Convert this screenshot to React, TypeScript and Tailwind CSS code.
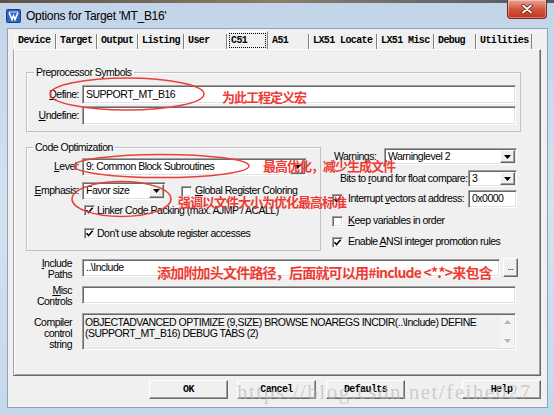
const sans = "font-['Liberation_Sans',Arial,sans-serif] text-[10.5px] tracking-[-0.5px]"
const mono = "font-['Liberation_Mono','Courier_New',monospace] font-bold text-[10px] tracking-[-0.6px]"
const cjk = "font-['Noto_Sans_CJK_SC',sans-serif] font-bold text-[#ee3b33]"
const sunken =
  'border border-t-[#a0a0a0] border-l-[#a0a0a0] border-r-white border-b-white shadow-[inset_1px_1px_0_#696969,inset_-1px_-1px_0_#e3e3e3]'
const raised =
  'border border-t-white border-l-white border-r-[#696969] border-b-[#696969] shadow-[inset_-1px_-1px_0_#a0a0a0]'

const tabs: [string, number][] = [
  ['Device', 42],
  ['Target', 41],
  ['Output', 41],
  ['Listing', 46],
  ['User', 43],
  ['C51', 41],
  ['A51', 41],
  ['LX51 Locate', 68],
  ['LX51 Misc', 57],
  ['Debug', 42],
  ['Utilities', 56],
]

export default function App() {
  return (
    <div
      className={`relative h-[415px] w-[554px] overflow-hidden bg-linear-to-b from-[#c2d4e9] via-[#d4e1ef] to-[#c6d8ec] text-black ${sans}`}
    >
      <div className="h-[3px] bg-linear-to-r from-[#5e5346] via-[#8c7c6a] to-[#4f5a66]" />

      {/* title bar */}
      <div className="flex h-[25px] items-center pl-[6px] pr-[7px]">
        <AppIcon />
        <span className="ml-[5px] text-[12px] tracking-[-0.3px]">Options for Target 'MT_B16'</span>
        <CloseButton />
      </div>

      {/* client area */}
      <div className="ml-[7px] h-[380px] w-[541px] border border-[#8da2bb] bg-[#f0f0f0]">
        <div className={`flex h-[20px] items-end pl-[6px] ${mono}`}>
          {tabs.map(([label, w]) =>
            label === 'C51' ? (
              <div key={label} className="flex h-[18px] border-r border-l border-t border-r-[#808080] border-l-white border-t-white bg-[#f0f0f0] p-[1px]" style={{ width: w }}>
                <span className="flex-1 border border-dotted border-black pl-[1px] leading-[13px]">{label}</span>
              </div>
            ) : (
              <div
                key={label}
                className="h-[15px] border-r border-l border-r-[#808080] border-l-white pl-[3px] leading-[14px]"
                style={{ width: w }}
              >
                {label}
              </div>
            ),
          )}
        </div>

        <div className="ml-[5px] h-[327px] w-[528px] border border-t-white border-l-[#a0a0a0] border-r-[#696969] border-b-[#696969] shadow-[inset_1px_0_0_white,inset_-1px_-1px_0_#a0a0a0]">
          <fieldset className="ml-[12px] mt-[16px] h-[66px] w-[495px] border border-[#c2c2c2] shadow-[inset_1px_1px_0_white]">
            <legend className="ml-[7px] px-[2px] leading-[12px]">Preprocessor Symbols</legend>
            <div className="mt-[7px] flex h-[19px] items-center">
              <span className="w-[52px] text-right">
                <u>D</u>efine:
              </span>
              <div className={`ml-[3px] flex h-[19px] w-[434px] items-center bg-white pl-[3px] ${sunken}`}>SUPPORT_MT_B16</div>
            </div>
            <div className="mt-[2px] flex h-[19px] items-center">
              <span className="w-[52px] text-right">
                <u>U</u>ndefine:
              </span>
              <div className={`ml-[3px] h-[19px] w-[434px] bg-white ${sunken}`} />
            </div>
          </fieldset>

          <div className="mt-[9px] flex items-start">
            <fieldset className="ml-[12px] h-[110px] w-[295px] border border-[#c2c2c2] shadow-[inset_1px_1px_0_white]">
              <legend className="ml-[6px] px-[2px] leading-[12px]">Code Optimization</legend>
              <div className="mt-[5px] flex h-[18px] items-center">
                <span className="w-[52px] text-right">
                  <u>L</u>evel:
                </span>
                <Combo className="ml-[3px] h-[18px] w-[225px]" value="9: Common Block Subroutines" />
              </div>
              <div className="mt-[6px] flex h-[18px] items-center">
                <span className="w-[52px] text-right">
                  <u>E</u>mphasis:
                </span>
                <Combo className="ml-[3px] h-[18px] w-[84px]" value="Favor size" />
                <Check className="ml-[15px]" />
                <span className="ml-[3px]">
                  <u>G</u>lobal Register Coloring
                </span>
              </div>
              <div className="mt-[4px] flex h-[13px] items-center pl-[57px]">
                <Check checked />
                <span className="ml-[2px]">Linker Code Packing (max. AJMP / ACALL)</span>
              </div>
              <div className="mt-[10px] flex h-[13px] items-center pl-[57px]">
                <Check checked />
                <span className="ml-[2px]">Don't use absolute register accesses</span>
              </div>
            </fieldset>

            <div className="ml-[11px] mt-[7px] flex w-[185px] flex-col">
              <div className="flex h-[17px] items-center">
                <span className="pl-[2px]">Warnings:</span>
                <Combo className="ml-auto h-[17px] w-[133px]" value="Warninglevel 2" />
              </div>
              <div className="mt-[5px] flex h-[17px] items-center">
                <span className="ml-[8px]">
                  Bits to <u>r</u>ound for float compare:
                </span>
                <Combo className="ml-auto h-[17px] w-[49px]" value="3" />
              </div>
              <div className="mt-[3px] flex h-[18px] items-center">
                <Check checked />
                <span className="ml-[5px]">
                  Interrupt <u>v</u>ectors at address:
                </span>
                <div className={`ml-auto flex h-[18px] w-[49px] items-center bg-white pl-[3px] ${sunken}`}>0x0000</div>
              </div>
              <div className="mt-[7px] flex h-[12px] items-center">
                <Check />
                <span className="ml-[5px]">
                  <u>K</u>eep variables in order
                </span>
              </div>
              <div className="mt-[9px] flex h-[12px] items-center">
                <Check checked />
                <span className="ml-[5px]">
                  Enable <u>A</u>NSI integer promotion rules
                </span>
              </div>
            </div>
          </div>

          <div className="mt-[7px] flex items-start">
            <div className="w-[58px] text-right leading-[11px]">
              <u>I</u>nclude
              <br />
              Paths
            </div>
            <div className={`ml-[10px] mt-[1px] flex h-[18px] w-[418px] items-center bg-white pl-[3px] ${sunken}`}>..\Include</div>
            <div className={`ml-[3px] flex h-[19px] w-[15px] items-center justify-center bg-[#f0f0f0] text-[9px] ${raised}`}>...</div>
          </div>
          <div className="mt-[5px] flex items-start">
            <div className="w-[58px] text-right leading-[11px]">
              <u>M</u>isc
              <br />
              Controls
            </div>
            <div className={`ml-[10px] mt-[1px] h-[18px] w-[434px] bg-white ${sunken}`} />
          </div>
          <div className="mt-[6px] flex items-start">
            <div className="mt-[4px] w-[58px] text-right leading-[11px]">
              Compiler
              <br />
              control
              <br />
              string
            </div>
            <div className={`ml-[10px] flex h-[37px] w-[434px] bg-[#f0f0f0] ${sunken}`}>
              <div className="flex-1 pl-[2px] pt-[3px] leading-[11px]">
                OBJECTADVANCED OPTIMIZE (9,SIZE) BROWSE NOAREGS INCDIR(..\Include) DEFINE
                <br />
                (SUPPORT_MT_B16) DEBUG TABS (2)
              </div>
              <div className="my-[1px] mr-[1px] flex w-[14px] flex-col items-center justify-between bg-[#f4f4f4] py-[5px]">
                <svg width="7" height="4" viewBox="0 0 7 4">
                  <path d="M3.5 0L7 4H0z" fill="#b4b4b4" />
                </svg>
                <svg width="7" height="4" viewBox="0 0 7 4">
                  <path d="M0 0h7L3.5 4z" fill="#b4b4b4" />
                </svg>
              </div>
            </div>
          </div>
        </div>

        <div className={`mt-[4px] flex pl-[141px] ${mono}`}>
          <DialogButton label="OK" />
          <DialogButton label="Cancel" className="ml-[9px]" />
          <DialogButton label="Defaults" className="ml-[10px]" />
          <DialogButton label="Help" className="ml-[57px]" />
        </div>
      </div>

      {/* annotations */}
      <svg className="pointer-events-none absolute left-0 top-0" width="554" height="415">
        <ellipse cx="127" cy="94" rx="77" ry="16" fill="none" stroke="#e9413a" strokeWidth="1.5" />
        <ellipse cx="161.5" cy="166" rx="87.5" ry="11.5" fill="none" stroke="#e9413a" strokeWidth="1.5" />
        <ellipse cx="121.5" cy="199" rx="49.5" ry="17.5" fill="none" stroke="#e9413a" strokeWidth="1.5" />
      </svg>
      <span className={`absolute left-[222px] top-[89px] text-[13px] leading-[16px] tracking-[-1px] ${cjk}`}>为此工程定义宏</span>
      <span className={`absolute left-[263px] top-[158px] text-[13px] leading-[16px] tracking-[-1px] ${cjk}`}>最高优化，减少生成文件</span>
      <span className={`absolute left-[178px] top-[194px] text-[13px] leading-[16px] tracking-[-1px] ${cjk}`}>强调以文件大小为优化最高标准</span>
      <span className={`absolute left-[157px] top-[263px] text-[14px] leading-[18px] tracking-[-0.8px] ${cjk}`}>
        添加附加头文件路径，后面就可以用#include &lt;*.*&gt;来包含
      </span>
      <span className="pointer-events-none absolute left-[237px] top-[381px] font-['Liberation_Serif',serif] text-[21px] leading-[22px] tracking-[1.5px] text-[#b4b4b4]/60">
        https://blog.csdn.net/feihe027
      </span>
    </div>
  )
}

function Combo({ className, value }: { className: string; value: string }) {
  return (
    <div className={`flex items-center bg-white ${sunken} ${className}`}>
      <span className="flex-1 truncate pl-[3px]">{value}</span>
      <div className={`m-[1px] flex h-[calc(100%-2px)] w-[15px] items-center justify-center bg-[#f0f0f0] ${raised}`}>
        <svg width="7" height="4" viewBox="0 0 7 4">
          <path d="M0 0h7L3.5 4z" fill="black" />
        </svg>
      </div>
    </div>
  )
}

function Check({ checked, className = '' }: { checked?: boolean; className?: string }) {
  return (
    <div className={`h-[11px] w-[11px] shrink-0 bg-white ${sunken} ${className}`}>
      {checked && (
        <svg width="9" height="9" viewBox="0 0 9 9">
          <path d="M1.5 4.2L3.6 6.5L7.6 1.8" fill="none" stroke="black" strokeWidth="1.6" />
        </svg>
      )}
    </div>
  )
}

function DialogButton({ label, className = '' }: { label: string; className?: string }) {
  return (
    <div className={`flex h-[19px] w-[79px] items-center justify-center bg-[#f0f0f0] ${raised} ${className}`}>{label}</div>
  )
}

function AppIcon() {
  return (
    <svg width="15" height="14" viewBox="0 0 15 14">
      <rect x="0.5" y="0.5" width="14" height="13" rx="1" fill="#2f63c0" stroke="#1d3f85" />
      <path d="M3 3.5L6 10.5L7.5 6.5L9 10.5L12 3.5" fill="none" stroke="white" strokeWidth="1.6" />
      <path d="M3 3h9" stroke="#d8e4ff" strokeWidth="1" />
    </svg>
  )
}

function CloseButton() {
  return (
    <div className="-mt-[3px] ml-auto flex h-[19px] w-[40px] items-center justify-center self-start rounded-b-[4px] border border-t-0 border-[#7b2a22] bg-linear-to-b from-[#e8a392] via-[#d4563f] to-[#c3301d] shadow-[inset_0_0_0_1px_rgba(255,255,255,0.35)]">
      <svg width="12" height="10" viewBox="0 0 12 10">
        <path d="M2 1.5L10 8.5M10 1.5L2 8.5" stroke="#5a1a12" strokeWidth="3.4" strokeLinecap="round" />
        <path d="M2 1.5L10 8.5M10 1.5L2 8.5" stroke="white" strokeWidth="1.9" strokeLinecap="round" />
      </svg>
    </div>
  )
}
